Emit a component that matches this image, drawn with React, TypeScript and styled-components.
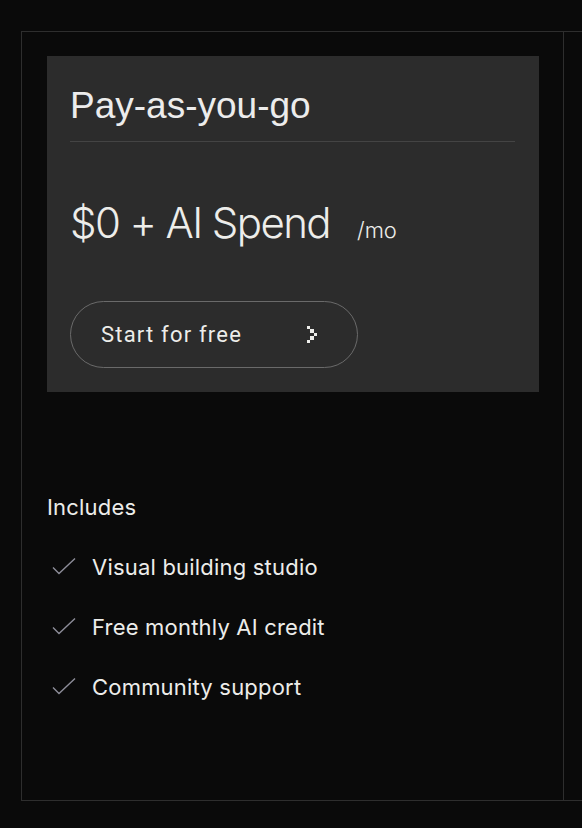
import styled, { createGlobalStyle } from "styled-components";

const GlobalStyle = createGlobalStyle`
  html, body {
    margin: 0;
    background: #0a0a0a;
    overflow: hidden;
  }
  body {
    font-family: Inter, "Liberation Sans", sans-serif;
    color: #ededea;
  }
`;

const Page = styled.div`
  padding: 31px 0 0 21px;
  height: 828px;
  box-sizing: border-box;
`;

const Columns = styled.div`
  display: grid;
  grid-template-columns: 542px 400px;
  width: 942px;
  height: 770px;
  box-sizing: border-box;
  border: 1px solid #2e2e2e;
  border-right: none;
`;

const Column = styled.div`
  padding: 24px 24px 0 25px;
  border-right: ${(p: { $divided?: boolean }) => (p.$divided ? "1px solid #2e2e2e" : "none")};
`;

const Card = styled.div`
  background: #2c2c2c;
  padding: 28px 24px 24px 23px;
`;

const Title = styled.div`
  font-family: "Liberation Sans", Arial, sans-serif;
  font-size: 37px;
  line-height: 43px;
  color: #ececec;
  padding-bottom: 14px;
  border-bottom: 1px solid #444444;
`;

const PriceRow = styled.div`
  display: flex;
  align-items: baseline;
  gap: 27px;
  margin-top: 56px;
`;

const Price = styled.span`
  font-size: 42px;
  font-weight: 300;
  line-height: 50px;
  letter-spacing: -1.6px;
  color: #ededea;
`;

const Period = styled.span`
  font-size: 22px;
  font-weight: 300;
  color: #ededea;
`;

const StartButton = styled.button`
  display: flex;
  align-items: center;
  justify-content: space-between;
  width: 288px;
  height: 67px;
  margin-top: 53px;
  padding: 0 39px 0 30px;
  box-sizing: border-box;
  background: transparent;
  border: 1px solid #6a6a6a;
  border-radius: 34px;
  color: #ededea;
  font-family: Roboto, "Liberation Sans", sans-serif;
  font-size: 22px;
  letter-spacing: 1.2px;
  cursor: pointer;
`;

const Includes = styled.div`
  margin-top: 100px;
  font-size: 22px;
  line-height: 30px;
  letter-spacing: 0.2px;
`;

const FeatureList = styled.ul`
  list-style: none;
  margin: 30px 0 0;
  padding: 0;
  display: flex;
  flex-direction: column;
  gap: 30px;
`;

const Feature = styled.li`
  display: flex;
  align-items: center;
  gap: 16px;
  padding-left: 5px;
  font-size: 22px;
  line-height: 30px;
  letter-spacing: 0.2px;
`;

const PixelChevron = () => (
  <svg width="12" height="17" viewBox="0 0 3 5" shapeRendering="crispEdges">
    <g fill="#ededea">
      <rect x="0" y="0" width="1" height="1" />
      <rect x="1" y="1" width="1" height="1" />
      <rect x="2" y="2" width="1" height="1" />
      <rect x="1" y="3" width="1" height="1" />
      <rect x="0" y="4" width="1" height="1" />
    </g>
  </svg>
);

const Check = () => (
  <svg width="24" height="20" viewBox="0 0 24 20">
    <path d="M1 10.5 L7 16.5 L23 1.5" fill="none" stroke="#8d8d99" strokeWidth="1.4" />
  </svg>
);

const features = ["Visual building studio", "Free monthly AI credit", "Community support"];

export default function App() {
  return (
    <>
      <GlobalStyle />
      <Page>
        <Columns>
          <Column $divided>
            <Card>
              <Title>Pay-as-you-go</Title>
              <PriceRow>
                <Price>$0 + AI Spend</Price>
                <Period>/mo</Period>
              </PriceRow>
              <StartButton>
                Start for free
                <PixelChevron />
              </StartButton>
            </Card>
            <Includes>Includes</Includes>
            <FeatureList>
              {features.map((f) => (
                <Feature key={f}>
                  <Check />
                  {f}
                </Feature>
              ))}
            </FeatureList>
          </Column>
          <Column />
        </Columns>
      </Page>
    </>
  );
}
